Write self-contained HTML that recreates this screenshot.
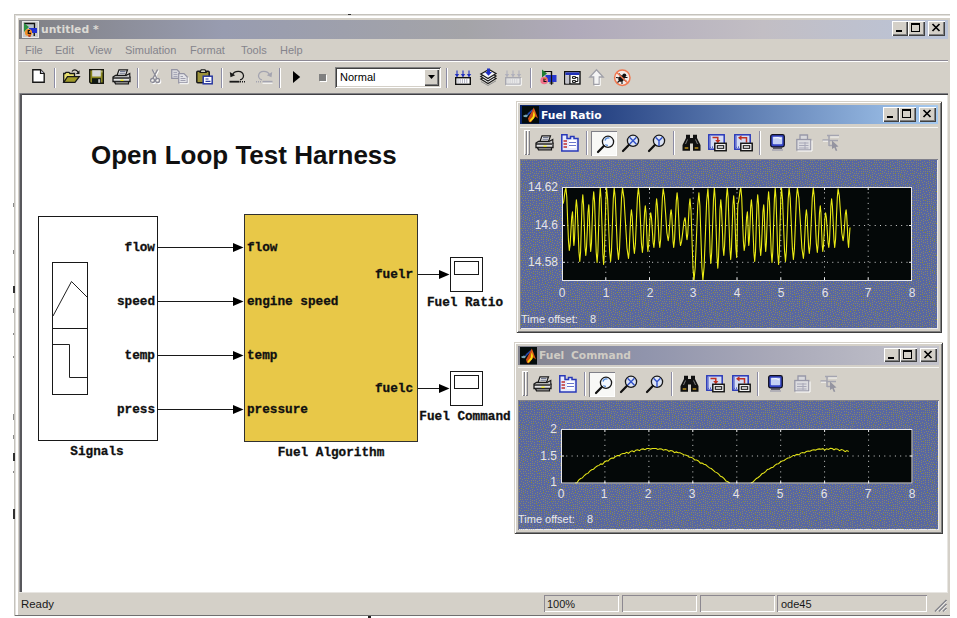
<!DOCTYPE html>
<html><head><meta charset="utf-8"><title>untitled *</title>
<style>
html,body{margin:0;padding:0;background:#fff;}
body{width:957px;height:618px;position:relative;overflow:hidden;font-family:"Liberation Sans",sans-serif;}
svg{overflow:visible;display:block}
</style></head><body>
<div style="position:absolute;left:14px;top:14px;width:936px;height:602px;background:#d4d0c8;box-shadow:inset 1px 1px 0 #c4c2bc,inset 0 -1px 0 #707070,inset 2px 2px 0 #e2e0dc,inset 4px 4px 0 #fff;"></div>
<div style="position:absolute;left:19px;top:19.5px;width:929px;height:19px;background:linear-gradient(90deg,#808084 0%,#989cb0 22%,#a4a4a8 48%,#b0aaba 60%,#c2bec4 80%,#bac4d8 100%);"></div>
<svg style="position:absolute;left:21.5px;top:20.5px" width="17" height="17" viewBox="0 0 17 17">
<rect x="0.5" y="0.5" width="16" height="16" fill="#c8c8c8" stroke="#e8e8e8"/>
<rect x="3" y="3" width="9" height="9" fill="#b8c0c8"/>
<path d="M2 2.5H12.5V12" fill="none" stroke="#101010" stroke-width="1.3"/>
<path d="M2 2L7 6L2 11Z" fill="#2c9040"/>
<rect x="7" y="7" width="8" height="5" fill="#2030d0"/>
<circle cx="6.5" cy="11.5" r="3.6" fill="#f09028"/>
<path d="M8 9.5H6.3V12.3H9" fill="none" stroke="#101010" stroke-width="1.2"/>
<path d="M6 14L9 13L8.5 16H6.5Z" fill="#c04820"/>
<rect x="11.5" y="12" width="1.5" height="3" fill="#202020"/>
</svg>
<svg style="position:absolute;left:41px;top:33.2px" width="1" height="1"><text x="0" y="0" text-anchor="start" xml:space="preserve" style="font:bold 10.8px 'DejaVu Sans','Liberation Sans',sans-serif;fill:#dcdad4;white-space:pre;">untitled *</text></svg>
<div style="position:absolute;left:891.5px;top:21px;width:16.5px;height:15px;background:#d4d0c8;box-shadow:inset 1px 1px 0 #fff,inset -1px -1px 0 #404040,inset -2px -2px 0 #808080;"></div>
<div style="position:absolute;left:895.5px;top:30px;width:6px;height:2px;background:#000"></div>
<div style="position:absolute;left:908px;top:21px;width:16.5px;height:15px;background:#d4d0c8;box-shadow:inset 1px 1px 0 #fff,inset -1px -1px 0 #404040,inset -2px -2px 0 #808080;"></div>
<div style="position:absolute;left:911px;top:23px;width:9px;height:9px;border:1px solid #000;border-top:2px solid #000;box-sizing:border-box"></div>
<div style="position:absolute;left:928px;top:21px;width:17px;height:15px;background:#d4d0c8;box-shadow:inset 1px 1px 0 #fff,inset -1px -1px 0 #404040,inset -2px -2px 0 #808080;"></div>
<svg style="position:absolute;left:932px;top:24px" width="8" height="7" viewBox="0 0 8 7"><path d="M0.5 0L7.5 7M7.5 0L0.5 7" stroke="#000" stroke-width="1.7" fill="none"/></svg>
<svg style="position:absolute;left:25px;top:54px" width="1" height="1"><text x="0" y="0" text-anchor="start" xml:space="preserve" style="font:11px 'Liberation Sans',sans-serif;fill:#84848c;white-space:pre;">File</text></svg>
<svg style="position:absolute;left:55px;top:54px" width="1" height="1"><text x="0" y="0" text-anchor="start" xml:space="preserve" style="font:11px 'Liberation Sans',sans-serif;fill:#84848c;white-space:pre;">Edit</text></svg>
<svg style="position:absolute;left:88.3px;top:54px" width="1" height="1"><text x="0" y="0" text-anchor="start" xml:space="preserve" style="font:11px 'Liberation Sans',sans-serif;fill:#84848c;white-space:pre;">View</text></svg>
<svg style="position:absolute;left:125px;top:54px" width="1" height="1"><text x="0" y="0" text-anchor="start" xml:space="preserve" style="font:11px 'Liberation Sans',sans-serif;fill:#84848c;white-space:pre;">Simulation</text></svg>
<svg style="position:absolute;left:190px;top:54px" width="1" height="1"><text x="0" y="0" text-anchor="start" xml:space="preserve" style="font:11px 'Liberation Sans',sans-serif;fill:#84848c;white-space:pre;">Format</text></svg>
<svg style="position:absolute;left:241.3px;top:54px" width="1" height="1"><text x="0" y="0" text-anchor="start" xml:space="preserve" style="font:11px 'Liberation Sans',sans-serif;fill:#84848c;white-space:pre;">Tools</text></svg>
<svg style="position:absolute;left:280px;top:54px" width="1" height="1"><text x="0" y="0" text-anchor="start" xml:space="preserve" style="font:11px 'Liberation Sans',sans-serif;fill:#84848c;white-space:pre;">Help</text></svg>
<div style="position:absolute;left:19px;top:60px;width:929px;height:1px;background:#8c8894"></div>
<div style="position:absolute;left:19px;top:61px;width:929px;height:1px;background:#fff"></div>
<div style="position:absolute;left:54px;top:68px;width:1px;height:20px;background:#8c8ca4"></div>
<div style="position:absolute;left:55px;top:68px;width:1px;height:20px;background:#fff"></div>
<div style="position:absolute;left:137px;top:68px;width:1px;height:20px;background:#8c8ca4"></div>
<div style="position:absolute;left:138px;top:68px;width:1px;height:20px;background:#fff"></div>
<div style="position:absolute;left:221px;top:68px;width:1px;height:20px;background:#8c8ca4"></div>
<div style="position:absolute;left:222px;top:68px;width:1px;height:20px;background:#fff"></div>
<div style="position:absolute;left:279px;top:68px;width:1px;height:20px;background:#8c8ca4"></div>
<div style="position:absolute;left:280px;top:68px;width:1px;height:20px;background:#fff"></div>
<div style="position:absolute;left:446px;top:68px;width:1px;height:20px;background:#8c8ca4"></div>
<div style="position:absolute;left:447px;top:68px;width:1px;height:20px;background:#fff"></div>
<div style="position:absolute;left:530px;top:68px;width:1px;height:20px;background:#8c8ca4"></div>
<div style="position:absolute;left:531px;top:68px;width:1px;height:20px;background:#fff"></div>
<svg style="position:absolute;left:32px;top:69px" width="13" height="14" viewBox="0 0 13 14"><path d="M0.8 0.8H8.5L12.2 4.5V13.2H0.8Z" fill="#fff" stroke="#181818" stroke-width="1.4"/><path d="M8.5 0.8V4.5H12.2" fill="#c8c8d8" stroke="#181818" stroke-width="1.2"/></svg>
<svg style="position:absolute;left:63px;top:68px" width="17" height="16" viewBox="0 0 17 16"><path d="M9 3.5C10.5 1.2 13.5 1.2 15 4" fill="none" stroke="#181818" stroke-width="1.2"/><path d="M16.5 2.2V6H12.8Z" fill="#181818"/><path d="M0.7 14.3V5.5H2L3 4.3H6L7 5.5H11.5V8.5" fill="#e8e070" stroke="#181818" stroke-width="1.3"/><path d="M0.7 14.3L4.5 8.7H16.3L12 14.3Z" fill="#a09a28" stroke="#181818" stroke-width="1.3"/></svg>
<svg style="position:absolute;left:89px;top:69px" width="15" height="15" viewBox="0 0 15 15"><path d="M0.7 0.7H14.3V14.3H2L0.7 13Z" fill="#8c8820" stroke="#181810" stroke-width="1.4"/><rect x="3.2" y="1.2" width="8.6" height="6.3" fill="#d8d8d8"/><rect x="3" y="9.2" width="9" height="5" fill="#101814"/><rect x="9.2" y="10.2" width="2" height="3.6" fill="#c0c0c0"/><rect x="12.4" y="1.5" width="1" height="2" fill="#d8d8a0"/></svg>
<svg style="position:absolute;left:112px;top:69px" width="19" height="16" viewBox="0 0 19 16"><path d="M5 6.5L7 0.8H15.5L13.5 6.5Z" fill="#e8e8e8" stroke="#181818" stroke-width="1.2"/><path d="M8 2.5H13.5M7.5 4.2H13" stroke="#707890" stroke-width="1.1"/><path d="M1 8L3.5 6.5H16L18 8V12.5H1Z" fill="#e4e4e4" stroke="#181818" stroke-width="1.3"/><path d="M14 6.5L17.8 4.5V9" fill="#c8c8c8" stroke="#181818" stroke-width="1.1"/><rect x="1" y="8.3" width="16" height="1.4" fill="#181818"/><rect x="8.5" y="10.6" width="3" height="1.3" fill="#f0e810"/><path d="M2.5 12.8H16.5V14.8H3.5Z" fill="#f4f4f4" stroke="#181818" stroke-width="1.2"/></svg>
<svg style="position:absolute;left:150px;top:69px" width="12" height="16" viewBox="0 0 12 16"><g transform="translate(1,1)"><path d="M2.2 0.5L7.2 10M7.6 0.5L2.6 10" stroke="#fff" stroke-width="1.4" fill="none"/><circle cx="2.6" cy="11.5" r="2" fill="none" stroke="#fff" stroke-width="1.3"/><circle cx="7.6" cy="11.5" r="2" fill="none" stroke="#fff" stroke-width="1.3"/></g><path d="M2.2 0.5L7.2 10M7.6 0.5L2.6 10" stroke="#8c8c98" stroke-width="1.4" fill="none"/><circle cx="2.6" cy="11.5" r="2" fill="none" stroke="#8c8c98" stroke-width="1.3"/><circle cx="7.6" cy="11.5" r="2" fill="none" stroke="#8c8c98" stroke-width="1.3"/></svg>
<svg style="position:absolute;left:171px;top:69px" width="18" height="15" viewBox="0 0 18 15"><path d="M0.7 0.7H6L8.3 3V9.3H0.7Z" fill="#d8d8dc" stroke="#9494a4" stroke-width="1.2"/><path d="M2.5 3.5H6M2.5 5.5H6.5M2.5 7.5H6.5" stroke="#a8a8b8" stroke-width="1"/><path d="M7.7 4.7H13L16.3 8V13.8H7.7Z" fill="#e4e4e8" stroke="#9494a4" stroke-width="1.2"/><path d="M9.5 7.5H12M9.5 9.5H14.5M9.5 11.5H14.5" stroke="#a0a0b0" stroke-width="1"/><path d="M8.5 14.7H17.2V8.5" stroke="#fff" stroke-width="1" fill="none"/></svg>
<svg style="position:absolute;left:196px;top:69px" width="17" height="16" viewBox="0 0 17 16"><rect x="0.8" y="2.3" width="12.4" height="11.4" rx="1" fill="#9c9238" stroke="#181818" stroke-width="1.5"/><path d="M4 3.5L5.2 0.8H9L10.2 3.5Z" fill="#d0d0c0" stroke="#181818" stroke-width="1.1"/><rect x="7.2" y="7.2" width="9" height="7.6" fill="#fff" stroke="#2838a0" stroke-width="1.5"/><path d="M9.5 10H12.5M9.5 12.3H14.5" stroke="#2838a0" stroke-width="1.2"/></svg>
<svg style="position:absolute;left:229px;top:69px" width="18" height="15" viewBox="0 0 18 15"><path d="M3.5 6C5 1.5 13.5 0.5 14.5 6.5C14.7 9 12.5 10.5 11 10.8" fill="none" stroke="#181818" stroke-width="1.3"/><path d="M0.8 3L1.5 8.2L6.2 6.2Z" fill="#181818"/><rect x="0.5" y="11.8" width="10" height="1.8" fill="#181818"/><path d="M11 12.7H17" stroke="#181818" stroke-width="1.6" stroke-dasharray="1 1"/></svg>
<svg style="position:absolute;left:255px;top:69px" width="18" height="15" viewBox="0 0 18 15"><path d="M14.5 6C13 1.5 4.5 0.5 3.5 6.5C3.3 9 5.5 10.5 7 10.8" fill="none" stroke="#a4a4b0" stroke-width="1.3"/><path d="M17.2 3L16.5 8.2L11.8 6.2Z" fill="#a4a4b0"/><rect x="7.5" y="11.8" width="10" height="1.8" fill="#a4a4b0"/><path d="M1 12.7H7" stroke="#a4a4b0" stroke-width="1.6" stroke-dasharray="1 1"/><path d="M7.5 14.2H17.5" stroke="#fff" stroke-width="1"/></svg>
<svg style="position:absolute;left:293px;top:71px" width="8" height="12" viewBox="0 0 8 12"><path d="M0 0L7.2 6L0 12Z" fill="#000"/></svg>
<div style="position:absolute;left:319px;top:74px;width:7px;height:7px;background:#808080;box-shadow:1px 1px 0 #fff"></div>
<div style="position:absolute;left:335px;top:67px;width:106px;height:21px;background:#fff;box-shadow:inset 1px 1px 0 #808080,inset -1px -1px 0 #fff,inset 2px 2px 0 #404040,inset -2px -2px 0 #d4d0c8;"></div>
<svg style="position:absolute;left:340px;top:81.4px" width="1" height="1"><text x="0" y="0" text-anchor="start" xml:space="preserve" style="font:11px 'Liberation Sans',sans-serif;fill:#000;white-space:pre;">Normal</text></svg>
<div style="position:absolute;left:424px;top:69px;width:15px;height:17px;background:#d4d0c8;box-shadow:inset 1px 1px 0 #fff,inset -1px -1px 0 #404040,inset -2px -2px 0 #808080;"></div>
<svg style="position:absolute;left:428px;top:75px" width="7" height="4" viewBox="0 0 7 4"><path d="M0 0H7L3.5 4Z" fill="#000"/></svg>
<svg style="position:absolute;left:455px;top:70px" width="17" height="16" viewBox="0 0 17 16"><rect x="0.7" y="7.7" width="14.6" height="6.6" fill="#fff" stroke="#101010" stroke-width="1.4"/><path d="M2.5 10H13.5M2.5 12H13.5" stroke="#606080" stroke-width="1" stroke-dasharray="1 1.2"/><path d="M2 0.5V6.5" stroke="#2030c0" stroke-width="1.1"/><path d="M-0.20000000000000018 4L2 7.2L4.2 4Z" fill="#2030c0"/><path d="M8 0.5V6.5" stroke="#2030c0" stroke-width="1.1"/><path d="M5.8 4L8 7.2L10.2 4Z" fill="#2030c0"/><path d="M14 0.5V6.5" stroke="#2030c0" stroke-width="1.1"/><path d="M11.8 4L14 7.2L16.2 4Z" fill="#2030c0"/></svg>
<svg style="position:absolute;left:480px;top:68px" width="17" height="18" viewBox="0 0 17 18"><path d="M0.8 11L8 15.5L16 10.5L9 6.5Z" fill="#fff" stroke="#181818" stroke-width="1.2"/><path d="M0.8 8.5L8 13L16 8L9 4Z" fill="#fff" stroke="#181818" stroke-width="1.2"/><path d="M0.8 6L8 10.5L16 5.5L9 1.5Z" fill="#f4f4f8" stroke="#181818" stroke-width="1.2"/><path d="M7 0.5H10V4H12L8.5 7.8L5 4H7Z" fill="#2030c0"/><path d="M1 13.5L8 17.5L16 12.8" fill="none" stroke="#909090" stroke-width="1"/></svg>
<svg style="position:absolute;left:505px;top:70px" width="17" height="16" viewBox="0 0 17 16"><rect x="0.7" y="7.7" width="14.6" height="6.6" fill="#e8e8e8" stroke="#a8a8b0" stroke-width="1.4"/><path d="M2.5 10H13.5M2.5 12H13.5" stroke="#c0c0c8" stroke-width="1" stroke-dasharray="1 1.2"/><path d="M2 0.5V6.5" stroke="#b0b0bc" stroke-width="1.1"/><path d="M-0.20000000000000018 4L2 7.2L4.2 4Z" fill="#b0b0bc"/><path d="M8 0.5V6.5" stroke="#b0b0bc" stroke-width="1.1"/><path d="M5.8 4L8 7.2L10.2 4Z" fill="#b0b0bc"/><path d="M14 0.5V6.5" stroke="#b0b0bc" stroke-width="1.1"/><path d="M11.8 4L14 7.2L16.2 4Z" fill="#b0b0bc"/><path d="M1 15.2H16.2V8" stroke="#fff" stroke-width="1" fill="none"/></svg>
<svg style="position:absolute;left:540px;top:69px" width="17" height="17" viewBox="0 0 17 17"><path d="M3 2.5H11.5V15.5M9.5 14H13.5" fill="none" stroke="#101010" stroke-width="1.2"/><path d="M2 0.5L7 4.5L2 8.5Z" fill="#207c34"/><rect x="5.5" y="6" width="11" height="7" fill="#2838d0"/><path d="M11.5 2.5V15.5" stroke="#101010" stroke-width="1.2"/><circle cx="4.2" cy="11.5" r="3.8" fill="#f07088"/><path d="M6 10H4V12.5H6.5" fill="none" stroke="#101010" stroke-width="1.1"/><path d="M4 10L7 9" stroke="#e08020" stroke-width="1.2"/></svg>
<svg style="position:absolute;left:564px;top:71px" width="17" height="14" viewBox="0 0 17 14"><rect x="0.7" y="0.7" width="15.3" height="12.3" fill="#fcfcfc" stroke="#101010" stroke-width="1.4"/><rect x="1.4" y="1.4" width="14" height="2.6" fill="#2030b8"/><rect x="5.2" y="4" width="1.3" height="9" fill="#101010"/><rect x="1.5" y="4.2" width="3.6" height="8.4" fill="#c4c4cc"/><path d="M8.5 5.6H11.5V7.4H8.5ZM8.5 9.6H11.5V11.4H8.5Z" fill="#fff" stroke="#101010" stroke-width="1"/><path d="M11.5 6.5H13.8V10.5H11.5" fill="none" stroke="#101010" stroke-width="1"/></svg>
<svg style="position:absolute;left:589px;top:69px" width="15" height="17" viewBox="0 0 15 17"><path d="M7.5 0.8L14.2 8H10.3V15.5H4.7V8H0.8Z" fill="#f4f4f4" stroke="#a0a0a8" stroke-width="1.3"/><path d="M5.5 16.5H11.2V8.8" stroke="#fff" stroke-width="1" fill="none"/></svg>
<svg style="position:absolute;left:613px;top:69px" width="19" height="18" viewBox="0 0 19 18"><circle cx="9.3" cy="8.7" r="7.7" fill="#f4ece8" stroke="#f07850" stroke-width="1.5"/><ellipse cx="8.5" cy="9.5" rx="2.8" ry="3.4" fill="#101010" transform="rotate(35 8.5 9.5)"/><circle cx="11.3" cy="6.3" r="1.9" fill="#101010"/><path d="M3 8.5L7 9M4.5 13.5L7.5 11M9 15V12M13.5 12.5L10.5 10.5M14.5 8.5L11 8.5M6 4.5L8 7" stroke="#101010" stroke-width="1.1"/><path d="M3.8 3.5L14.8 14" stroke="#f07850" stroke-width="1.5"/></svg>
<div style="position:absolute;left:19px;top:93px;width:929px;height:1px;background:#808084"></div>
<div style="position:absolute;left:20px;top:94px;width:928px;height:1px;background:#404044"></div>
<div style="position:absolute;left:19px;top:93px;width:1px;height:499px;background:#9a9a9e"></div>
<div style="position:absolute;left:20px;top:94px;width:1.8px;height:498px;background:#58585c"></div>
<div style="position:absolute;left:22px;top:95px;width:925px;height:497px;background:#fff"></div>
<div style="position:absolute;left:19px;top:592px;width:929px;height:1px;background:#e8e6e2"></div>
<div style="position:absolute;left:947px;top:95px;width:1px;height:497px;background:#e8e6e2"></div>
<div style="position:absolute;left:13px;top:203px;width:1px;height:4px;background:#8a8a8a"></div>
<div style="position:absolute;left:13px;top:250px;width:1px;height:4px;background:#8a8a8a"></div>
<div style="position:absolute;left:13px;top:286px;width:1.5px;height:7px;background:#303030"></div>
<div style="position:absolute;left:13px;top:308px;width:1px;height:5px;background:#8a8a8a"></div>
<div style="position:absolute;left:13px;top:333px;width:1px;height:2px;background:#8a8a8a"></div>
<div style="position:absolute;left:13px;top:356px;width:1px;height:2px;background:#8a8a8a"></div>
<div style="position:absolute;left:13px;top:414px;width:1px;height:6px;background:#8a8a8a"></div>
<div style="position:absolute;left:13px;top:435px;width:1px;height:4px;background:#8a8a8a"></div>
<div style="position:absolute;left:13px;top:453px;width:1.5px;height:8px;background:#303030"></div>
<div style="position:absolute;left:13px;top:471px;width:1px;height:2px;background:#8a8a8a"></div>
<div style="position:absolute;left:13px;top:509px;width:1.5px;height:10px;background:#303030"></div>
<div style="position:absolute;left:347.5px;top:14px;width:3px;height:1px;background:#303030"></div>
<div style="position:absolute;left:368px;top:616.3px;width:2.5px;height:1.7px;background:#202020"></div>
<svg style="position:absolute;left:21px;top:607.8px" width="1" height="1"><text x="0" y="0" text-anchor="start" xml:space="preserve" style="font:11.4px 'Liberation Sans',sans-serif;fill:#181818;white-space:pre;">Ready</text></svg>
<div style="position:absolute;left:544px;top:595px;width:75px;height:17px;box-shadow:inset 1px 1px 0 #8c8890,inset -1px -1px 0 #fff;"></div>
<div style="position:absolute;left:622px;top:595px;width:75px;height:17px;box-shadow:inset 1px 1px 0 #8c8890,inset -1px -1px 0 #fff;"></div>
<div style="position:absolute;left:700px;top:595px;width:75px;height:17px;box-shadow:inset 1px 1px 0 #8c8890,inset -1px -1px 0 #fff;"></div>
<div style="position:absolute;left:777px;top:595px;width:150px;height:17px;box-shadow:inset 1px 1px 0 #8c8890,inset -1px -1px 0 #fff;"></div>
<svg style="position:absolute;left:547px;top:607.8px" width="1" height="1"><text x="0" y="0" text-anchor="start" xml:space="preserve" style="font:11px 'Liberation Sans',sans-serif;fill:#181818;white-space:pre;">100%</text></svg>
<svg style="position:absolute;left:781px;top:607.8px" width="1" height="1"><text x="0" y="0" text-anchor="start" xml:space="preserve" style="font:11px 'Liberation Sans',sans-serif;fill:#181818;white-space:pre;">ode45</text></svg>
<svg style="position:absolute;left:934px;top:599px" width="13" height="13" viewBox="0 0 13 13"><path d="M12.5 1L1 12.5M12.5 5L5 12.5M12.5 9L9 12.5" stroke="#808088" stroke-width="1.6"/><path d="M12.5 2.3L2.3 12.5M12.5 6.3L6.3 12.5M12.5 10.3L10.3 12.5" stroke="#fff" stroke-width="0.8"/></svg>
<svg style="position:absolute;left:90.5px;top:164.2px" width="1" height="1"><text x="0" y="0" text-anchor="start" xml:space="preserve" style="font:bold 26px 'Liberation Sans',sans-serif;fill:#101010;white-space:pre;">Open Loop Test Harness</text></svg>
<div style="position:absolute;left:38px;top:216px;width:120px;height:225px;border:1px solid #181818;box-sizing:border-box;background:#fff"></div>
<div style="position:absolute;left:52px;top:262px;width:36px;height:133px;border:1px solid #181818;box-sizing:border-box"></div>
<div style="position:absolute;left:52px;top:328px;width:36px;height:1px;background:#181818"></div>
<svg style="position:absolute;left:52px;top:262px" width="36" height="133" viewBox="0 0 36 133"><path d="M1 54L19.5 19.5L35 35" fill="none" stroke="#202020" stroke-width="1"/><path d="M1 82.5H17.5V115.5H35" fill="none" stroke="#202020" stroke-width="1"/></svg>
<svg style="position:absolute;left:154.5px;top:250.7px" width="1" height="1"><text x="0" y="0" text-anchor="end" xml:space="preserve" style="font:bold 12.7px 'Liberation Mono',monospace;fill:#101010;white-space:pre;stroke:#101010;stroke-width:0.3px;">flow</text></svg>
<div style="position:absolute;left:158px;top:247px;width:77px;height:1px;background:#181818"></div>
<svg style="position:absolute;left:233px;top:243px" width="11" height="9" viewBox="0 0 11 9"><path d="M0 0L10.5 4.5L0 9Z" fill="#000"/></svg>
<svg style="position:absolute;left:154.5px;top:304.7px" width="1" height="1"><text x="0" y="0" text-anchor="end" xml:space="preserve" style="font:bold 12.7px 'Liberation Mono',monospace;fill:#101010;white-space:pre;stroke:#101010;stroke-width:0.3px;">speed</text></svg>
<div style="position:absolute;left:158px;top:301px;width:77px;height:1px;background:#181818"></div>
<svg style="position:absolute;left:233px;top:297px" width="11" height="9" viewBox="0 0 11 9"><path d="M0 0L10.5 4.5L0 9Z" fill="#000"/></svg>
<svg style="position:absolute;left:154.5px;top:358.7px" width="1" height="1"><text x="0" y="0" text-anchor="end" xml:space="preserve" style="font:bold 12.7px 'Liberation Mono',monospace;fill:#101010;white-space:pre;stroke:#101010;stroke-width:0.3px;">temp</text></svg>
<div style="position:absolute;left:158px;top:355px;width:77px;height:1px;background:#181818"></div>
<svg style="position:absolute;left:233px;top:351px" width="11" height="9" viewBox="0 0 11 9"><path d="M0 0L10.5 4.5L0 9Z" fill="#000"/></svg>
<svg style="position:absolute;left:154.5px;top:412.7px" width="1" height="1"><text x="0" y="0" text-anchor="end" xml:space="preserve" style="font:bold 12.7px 'Liberation Mono',monospace;fill:#101010;white-space:pre;stroke:#101010;stroke-width:0.3px;">press</text></svg>
<div style="position:absolute;left:158px;top:409px;width:77px;height:1px;background:#181818"></div>
<svg style="position:absolute;left:233px;top:405px" width="11" height="9" viewBox="0 0 11 9"><path d="M0 0L10.5 4.5L0 9Z" fill="#000"/></svg>
<svg style="position:absolute;left:97px;top:455.3px" width="1" height="1"><text x="0" y="0" text-anchor="middle" xml:space="preserve" style="font:bold 12.7px 'Liberation Mono',monospace;fill:#101010;white-space:pre;stroke:#101010;stroke-width:0.3px;">Signals</text></svg>
<div style="position:absolute;left:244px;top:214px;width:174px;height:228px;border:1px solid #303030;box-sizing:border-box;background:#e8c848"></div>
<svg style="position:absolute;left:246.6px;top:250.7px" width="1" height="1"><text x="0" y="0" text-anchor="start" xml:space="preserve" style="font:bold 12.7px 'Liberation Mono',monospace;fill:#101010;white-space:pre;stroke:#101010;stroke-width:0.3px;">flow</text></svg>
<svg style="position:absolute;left:246.6px;top:304.7px" width="1" height="1"><text x="0" y="0" text-anchor="start" xml:space="preserve" style="font:bold 12.7px 'Liberation Mono',monospace;fill:#101010;white-space:pre;stroke:#101010;stroke-width:0.3px;">engine speed</text></svg>
<svg style="position:absolute;left:246.6px;top:358.7px" width="1" height="1"><text x="0" y="0" text-anchor="start" xml:space="preserve" style="font:bold 12.7px 'Liberation Mono',monospace;fill:#101010;white-space:pre;stroke:#101010;stroke-width:0.3px;">temp</text></svg>
<svg style="position:absolute;left:246.6px;top:412.7px" width="1" height="1"><text x="0" y="0" text-anchor="start" xml:space="preserve" style="font:bold 12.7px 'Liberation Mono',monospace;fill:#101010;white-space:pre;stroke:#101010;stroke-width:0.3px;">pressure</text></svg>
<svg style="position:absolute;left:330.5px;top:456px" width="1" height="1"><text x="0" y="0" text-anchor="middle" xml:space="preserve" style="font:bold 12.7px 'Liberation Mono',monospace;fill:#101010;white-space:pre;stroke:#101010;stroke-width:0.3px;">Fuel Algorithm</text></svg>
<svg style="position:absolute;left:413.3px;top:277.7px" width="1" height="1"><text x="0" y="0" text-anchor="end" xml:space="preserve" style="font:bold 12.7px 'Liberation Mono',monospace;fill:#101010;white-space:pre;stroke:#101010;stroke-width:0.3px;">fuelr</text></svg>
<div style="position:absolute;left:418px;top:274px;width:23px;height:1px;background:#181818"></div>
<svg style="position:absolute;left:439px;top:270px" width="11" height="9" viewBox="0 0 11 9"><path d="M0 0L10.5 4.5L0 9Z" fill="#000"/></svg>
<div style="position:absolute;left:450px;top:257px;width:33px;height:35px;border:1px solid #181818;box-sizing:border-box;background:#fff"></div>
<div style="position:absolute;left:454px;top:261px;width:25px;height:14px;border:1px solid #181818;box-sizing:border-box;background:#fff"></div>
<svg style="position:absolute;left:465.3px;top:305.8px" width="1" height="1"><text x="0" y="0" text-anchor="middle" xml:space="preserve" style="font:bold 12.7px 'Liberation Mono',monospace;fill:#101010;white-space:pre;stroke:#101010;stroke-width:0.3px;">Fuel Ratio</text></svg>
<svg style="position:absolute;left:413.3px;top:391.7px" width="1" height="1"><text x="0" y="0" text-anchor="end" xml:space="preserve" style="font:bold 12.7px 'Liberation Mono',monospace;fill:#101010;white-space:pre;stroke:#101010;stroke-width:0.3px;">fuelc</text></svg>
<div style="position:absolute;left:418px;top:388px;width:23px;height:1px;background:#181818"></div>
<svg style="position:absolute;left:439px;top:384px" width="11" height="9" viewBox="0 0 11 9"><path d="M0 0L10.5 4.5L0 9Z" fill="#000"/></svg>
<div style="position:absolute;left:450px;top:371px;width:33px;height:35px;border:1px solid #181818;box-sizing:border-box;background:#fff"></div>
<div style="position:absolute;left:454px;top:375px;width:25px;height:14px;border:1px solid #181818;box-sizing:border-box;background:#fff"></div>
<svg style="position:absolute;left:465.3px;top:419.5px" width="1" height="1"><text x="0" y="0" text-anchor="middle" xml:space="preserve" style="font:bold 12.7px 'Liberation Mono',monospace;fill:#101010;white-space:pre;stroke:#101010;stroke-width:0.3px;">Fuel Command</text></svg>
<div style="position:absolute;left:516px;top:101px;width:426px;height:232px;background:#d4d0c8;box-shadow:inset 1px 1px 0 #d4d0c8,inset -1px -1px 0 #404040,inset 2px 2px 0 #fff,inset -2px -2px 0 #808080;"></div>
<div style="position:absolute;left:520px;top:105px;width:418px;height:19px;background:linear-gradient(90deg,#0a246a 0%,#5877ad 50%,#a6caf0 100%)"></div>
<svg style="position:absolute;left:521.8px;top:106px" width="17" height="17.5" viewBox="0 0 17 17.5"><rect width="17" height="17.5" fill="#040c0c"/><path d="M1 9.7L4 8.4L6.2 9.4L4.6 11.2L2 10.9Z" fill="#78a4b8"/><path d="M10.6 3L6.6 6.6L4.8 8.6L6.4 9.2L10.9 4.6Z" fill="#2848a8"/><path d="M11.8 1.5L13.6 6L16 12.4L13.3 10.6L12 12.3L9 16.2L7 16L6 12.6L9 7Z" fill="#d05018"/><path d="M11.8 2.5L12.8 6L11 8L12 5Z" fill="#f08828"/><path d="M12 5.8L13 9L12.2 12L10 14.2L8.2 15.8L7.4 14.8L10.8 10.6L11.2 7Z" fill="#f8e010"/></svg>
<svg style="position:absolute;left:541px;top:118.7px" width="1" height="1"><text x="0" y="0" text-anchor="start" xml:space="preserve" style="font:bold 10.7px 'DejaVu Sans','Liberation Sans',sans-serif;fill:#fff;white-space:pre;">Fuel Ratio</text></svg>
<div style="position:absolute;left:882.5px;top:107px;width:16.5px;height:14.5px;background:#d4d0c8;box-shadow:inset 1px 1px 0 #fff,inset -1px -1px 0 #404040,inset -2px -2px 0 #808080;"></div>
<div style="position:absolute;left:886.5px;top:116px;width:6px;height:2px;background:#000"></div>
<div style="position:absolute;left:899px;top:107px;width:16.5px;height:14.5px;background:#d4d0c8;box-shadow:inset 1px 1px 0 #fff,inset -1px -1px 0 #404040,inset -2px -2px 0 #808080;"></div>
<div style="position:absolute;left:902px;top:109px;width:9px;height:9px;border:1px solid #000;border-top:2px solid #000;box-sizing:border-box"></div>
<div style="position:absolute;left:918.5px;top:107px;width:17px;height:14.5px;background:#d4d0c8;box-shadow:inset 1px 1px 0 #fff,inset -1px -1px 0 #404040,inset -2px -2px 0 #808080;"></div>
<svg style="position:absolute;left:922.5px;top:110px" width="8" height="7" viewBox="0 0 8 7"><path d="M0.5 0L7.5 7M7.5 0L0.5 7" stroke="#000" stroke-width="1.7" fill="none"/></svg>
<div style="position:absolute;left:520px;top:126.5px;width:418px;height:1px;background:#f4f4f0"></div>
<div style="position:absolute;left:524px;top:130px;width:3px;height:25px;background:#d4d0c8;box-shadow:inset 1px 1px 0 #fff,inset -1px -1px 0 #808088;"></div>
<div style="position:absolute;left:527px;top:130px;width:3px;height:25px;background:#d4d0c8;box-shadow:inset 1px 1px 0 #fff,inset -1px -1px 0 #808088;"></div>
<svg style="position:absolute;left:535px;top:135px" width="19" height="16" viewBox="0 0 19 16"><path d="M5 6.5L7 0.8H15.5L13.5 6.5Z" fill="#e8e8e8" stroke="#181818" stroke-width="1.2"/><path d="M8 2.5H13.5M7.5 4.2H13" stroke="#707890" stroke-width="1.1"/><path d="M1 8L3.5 6.5H16L18 8V12.5H1Z" fill="#e4e4e4" stroke="#181818" stroke-width="1.3"/><path d="M14 6.5L17.8 4.5V9" fill="#c8c8c8" stroke="#181818" stroke-width="1.1"/><rect x="1" y="8.3" width="16" height="1.4" fill="#181818"/><rect x="8.5" y="10.6" width="3" height="1.3" fill="#f0e810"/><path d="M2.5 12.8H16.5V14.8H3.5Z" fill="#f4f4f4" stroke="#181818" stroke-width="1.2"/></svg>
<svg style="position:absolute;left:561px;top:134px" width="18" height="18" viewBox="0 0 18 18"><path d="M0.8 17H17V4.5H13V2.5H9.5V4.5H6V0.8H0.8Z" fill="#e8ecfc" stroke="#2838b8" stroke-width="1.5"/><path d="M2.5 7H6M2.5 10H6M2.5 13H6" stroke="#c03030" stroke-width="1.5"/><path d="M8 7H15M8 10H15M8 13H15" stroke="#fff" stroke-width="1.8"/><path d="M8 8.5H15M8 11.5H15" stroke="#4858c0" stroke-width="0.8"/></svg>
<div style="position:absolute;left:586px;top:131px;width:1px;height:24px;background:#8c8ca4"></div>
<div style="position:absolute;left:587px;top:131px;width:1px;height:24px;background:#fff"></div>
<div style="position:absolute;left:591px;top:131px;width:26px;height:25px;background:#f8f8f6;box-shadow:inset 1px 1px 0 #808088,inset -1px -1px 0 #fff;"></div>
<svg style="position:absolute;left:597px;top:135px" width="18" height="18" viewBox="0 0 18 18"><circle cx="11" cy="6.8" r="5.6" fill="#f4f8ff" stroke="#181818" stroke-width="1.3"/><path d="M8 5.5A3.6 3.6 0 0 1 12.5 3.2" stroke="#5088d8" stroke-width="1.3" fill="none"/><path d="M8.5 9.3A3.6 3.6 0 0 0 11 10.4" stroke="#5088d8" stroke-width="1.1" fill="none"/><path d="M6.8 11L1 17" stroke="#101010" stroke-width="2.2" stroke-linecap="round"/></svg>
<svg style="position:absolute;left:622px;top:134px" width="18" height="18" viewBox="0 0 18 18"><circle cx="11" cy="6.8" r="5.6" fill="#dce4f4" stroke="#181818" stroke-width="1.3"/><path d="M7.5 3.3L14.5 10.3M14.5 3.3L7.5 10.3" stroke="#3050c8" stroke-width="1.4"/><path d="M6.8 11L1 17" stroke="#101010" stroke-width="2.2" stroke-linecap="round"/></svg>
<svg style="position:absolute;left:648px;top:134px" width="18" height="18" viewBox="0 0 18 18"><circle cx="11" cy="6.8" r="5.6" fill="#dce4f4" stroke="#181818" stroke-width="1.3"/><path d="M7.5 3.3L11 6.8L14.5 3.3M11 6.8V12" stroke="#3050c8" stroke-width="1.4" fill="none"/><path d="M6.8 11L1 17" stroke="#101010" stroke-width="2.2" stroke-linecap="round"/></svg>
<div style="position:absolute;left:673px;top:131px;width:1px;height:24px;background:#8c8ca4"></div>
<div style="position:absolute;left:674px;top:131px;width:1px;height:24px;background:#fff"></div>
<svg style="position:absolute;left:682px;top:134px" width="19" height="18" viewBox="0 0 19 18"><path d="M4 0.8H8V4H11V0.8H15V4L18.5 11V16.8H11V9.5H8V16.8H0.5V11L4 4Z" fill="#101010"/><rect x="2.7" y="13" width="3.6" height="2" fill="#907018"/><rect x="12.7" y="13" width="3.6" height="2" fill="#907018"/><path d="M5.5 5.5L3.5 10" stroke="#888" stroke-width="0.9"/><path d="M13.5 5.5L15.5 10" stroke="#888" stroke-width="0.9"/></svg>
<svg style="position:absolute;left:708px;top:134px" width="19" height="18" viewBox="0 0 19 18"><rect x="0.8" y="0.8" width="15.4" height="14.4" fill="#d4dcf4" stroke="#2838b8" stroke-width="1.5"/><path d="M2.3 2.5V14M2 13.2H14" stroke="#2838b8" stroke-width="1.2" stroke-dasharray="1 1"/><path d="M4.5 3.5H9.8V7" fill="none" stroke="#c03020" stroke-width="1.5"/><path d="M7.2 6L9.8 9.3L12.4 6Z" fill="#c03020"/><rect x="6.8" y="9.3" width="11.4" height="7.4" fill="#fcfcfc" stroke="#181818" stroke-width="1.5"/><rect x="9.3" y="11.7" width="6.4" height="2.6" fill="none" stroke="#181818" stroke-width="1.1"/></svg>
<svg style="position:absolute;left:734px;top:134px" width="19" height="18" viewBox="0 0 19 18"><rect x="0.8" y="0.8" width="15.4" height="14.4" fill="#d4dcf4" stroke="#2838b8" stroke-width="1.5"/><path d="M2.3 2.5V14M2 13.2H14" stroke="#2838b8" stroke-width="1.2" stroke-dasharray="1 1"/><path d="M12.5 8.5V3.8H7" fill="none" stroke="#c03020" stroke-width="1.5"/><path d="M7.5 1.2L4 3.8L7.5 6.4Z" fill="#c03020"/><rect x="6.8" y="9.3" width="11.4" height="7.4" fill="#fcfcfc" stroke="#181818" stroke-width="1.5"/><rect x="9.3" y="11.7" width="6.4" height="2.6" fill="none" stroke="#181818" stroke-width="1.1"/></svg>
<div style="position:absolute;left:759px;top:131px;width:1px;height:24px;background:#8c8ca4"></div>
<div style="position:absolute;left:760px;top:131px;width:1px;height:24px;background:#fff"></div>
<svg style="position:absolute;left:770px;top:134px" width="15" height="17" viewBox="0 0 15 17"><rect x="0.7" y="0.7" width="13.6" height="12.2" rx="1.8" fill="#3444c4" stroke="#101020" stroke-width="1.3"/><rect x="2.8" y="2.8" width="9.4" height="7.4" rx="0.8" fill="#c4d0f4"/><path d="M3.5 4L8 3.5L11.5 5" stroke="#f4f8ff" stroke-width="1.2" fill="none"/><path d="M3 14H12" stroke="#404050" stroke-width="1.6"/><path d="M2 16H13" stroke="#9c9cac" stroke-width="1.2"/></svg>
<svg style="position:absolute;left:796px;top:134px" width="17" height="18" viewBox="0 0 17 18"><path d="M4 5.5V1H11.5V5.5" fill="#d8d8dc" stroke="#9898a8" stroke-width="1.3"/><rect x="0.8" y="5.5" width="14" height="10.5" fill="#dcdce0" stroke="#9898a8" stroke-width="1.3"/><path d="M3 9H12.5M3 11.5H12.5M3 14H12.5" stroke="#a8a8b8" stroke-width="1.1"/><path d="M9 8V15" stroke="#a8a8b8" stroke-width="1"/><path d="M1.5 17H16V6.5" stroke="#fff" stroke-width="1" fill="none"/></svg>
<svg style="position:absolute;left:822px;top:134px" width="18" height="18" viewBox="0 0 18 18"><path d="M0.5 6H7M5 1.5H17M7 1.5V12M7 6.5H16M7 11.5H14" stroke="#a4a4b0" stroke-width="1.5" fill="none"/><path d="M10 6.5L16.5 12.5L13.8 13L15.3 16.5L13.8 17L12.3 13.5L10 15Z" fill="#9494a0"/><path d="M1 7.2H6M8.2 3H17" stroke="#fff" stroke-width="0.8"/></svg>
<div style="position:absolute;left:520px;top:159px;width:418px;height:170px;background:#5867a2;box-shadow:inset 1px 1px 0 #80808c,inset -1px -1px 0 #e8e8ec;"></div>
<svg style="position:absolute;left:521px;top:160px" width="416" height="168"><defs><pattern id="dp" width="32" height="32" patternUnits="userSpaceOnUse"><rect x="0" y="4" width="1" height="1" fill="#989810"/><rect x="0" y="10" width="1" height="1" fill="#86866a"/><rect x="0" y="21" width="1" height="1" fill="#86866a"/><rect x="0" y="24" width="1" height="1" fill="#86866a"/><rect x="0" y="26" width="1" height="1" fill="#86866a"/><rect x="1" y="0" width="1" height="1" fill="#86866a"/><rect x="1" y="2" width="1" height="1" fill="#86866a"/><rect x="1" y="6" width="1" height="1" fill="#86866a"/><rect x="1" y="13" width="1" height="1" fill="#86866a"/><rect x="1" y="19" width="1" height="1" fill="#86866a"/><rect x="1" y="29" width="1" height="1" fill="#86866a"/><rect x="2" y="4" width="1" height="1" fill="#86866a"/><rect x="2" y="8" width="1" height="1" fill="#86866a"/><rect x="2" y="11" width="1" height="1" fill="#86866a"/><rect x="2" y="16" width="1" height="1" fill="#86866a"/><rect x="2" y="23" width="1" height="1" fill="#989810"/><rect x="2" y="25" width="1" height="1" fill="#86866a"/><rect x="2" y="27" width="1" height="1" fill="#86866a"/><rect x="3" y="0" width="1" height="1" fill="#86866a"/><rect x="3" y="2" width="1" height="1" fill="#86866a"/><rect x="3" y="14" width="1" height="1" fill="#86866a"/><rect x="3" y="21" width="1" height="1" fill="#86866a"/><rect x="3" y="30" width="1" height="1" fill="#86866a"/><rect x="4" y="4" width="1" height="1" fill="#86866a"/><rect x="4" y="6" width="1" height="1" fill="#86866a"/><rect x="4" y="8" width="1" height="1" fill="#86866a"/><rect x="4" y="17" width="1" height="1" fill="#86866a"/><rect x="4" y="19" width="1" height="1" fill="#86866a"/><rect x="4" y="24" width="1" height="1" fill="#86866a"/><rect x="4" y="26" width="1" height="1" fill="#86866a"/><rect x="4" y="28" width="1" height="1" fill="#989810"/><rect x="5" y="0" width="1" height="1" fill="#86866a"/><rect x="5" y="10" width="1" height="1" fill="#86866a"/><rect x="5" y="13" width="1" height="1" fill="#86866a"/><rect x="5" y="21" width="1" height="1" fill="#86866a"/><rect x="5" y="30" width="1" height="1" fill="#86866a"/><rect x="6" y="2" width="1" height="1" fill="#86866a"/><rect x="6" y="6" width="1" height="1" fill="#86866a"/><rect x="6" y="15" width="1" height="1" fill="#86866a"/><rect x="6" y="18" width="1" height="1" fill="#86866a"/><rect x="6" y="25" width="1" height="1" fill="#86866a"/><rect x="6" y="27" width="1" height="1" fill="#86866a"/><rect x="7" y="4" width="1" height="1" fill="#86866a"/><rect x="7" y="8" width="1" height="1" fill="#86866a"/><rect x="7" y="10" width="1" height="1" fill="#86866a"/><rect x="7" y="13" width="1" height="1" fill="#989810"/><rect x="7" y="20" width="1" height="1" fill="#86866a"/><rect x="7" y="23" width="1" height="1" fill="#86866a"/><rect x="7" y="31" width="1" height="1" fill="#86866a"/><rect x="8" y="2" width="1" height="1" fill="#86866a"/><rect x="8" y="15" width="1" height="1" fill="#86866a"/><rect x="8" y="17" width="1" height="1" fill="#86866a"/><rect x="8" y="26" width="1" height="1" fill="#86866a"/><rect x="8" y="28" width="1" height="1" fill="#86866a"/><rect x="9" y="0" width="1" height="1" fill="#86866a"/><rect x="9" y="5" width="1" height="1" fill="#86866a"/><rect x="9" y="8" width="1" height="1" fill="#86866a"/><rect x="9" y="11" width="1" height="1" fill="#86866a"/><rect x="9" y="13" width="1" height="1" fill="#86866a"/><rect x="9" y="19" width="1" height="1" fill="#86866a"/><rect x="9" y="23" width="1" height="1" fill="#989810"/><rect x="9" y="30" width="1" height="1" fill="#86866a"/><rect x="10" y="16" width="1" height="1" fill="#86866a"/><rect x="10" y="21" width="1" height="1" fill="#86866a"/><rect x="11" y="0" width="1" height="1" fill="#86866a"/><rect x="11" y="2" width="1" height="1" fill="#86866a"/><rect x="11" y="4" width="1" height="1" fill="#86866a"/><rect x="11" y="6" width="1" height="1" fill="#86866a"/><rect x="11" y="8" width="1" height="1" fill="#86866a"/><rect x="11" y="12" width="1" height="1" fill="#86866a"/><rect x="11" y="25" width="1" height="1" fill="#86866a"/><rect x="11" y="27" width="1" height="1" fill="#86866a"/><rect x="11" y="30" width="1" height="1" fill="#86866a"/><rect x="12" y="10" width="1" height="1" fill="#86866a"/><rect x="12" y="15" width="1" height="1" fill="#86866a"/><rect x="12" y="17" width="1" height="1" fill="#989810"/><rect x="12" y="20" width="1" height="1" fill="#86866a"/><rect x="12" y="22" width="1" height="1" fill="#86866a"/><rect x="13" y="0" width="1" height="1" fill="#86866a"/><rect x="13" y="3" width="1" height="1" fill="#86866a"/><rect x="13" y="5" width="1" height="1" fill="#86866a"/><rect x="13" y="8" width="1" height="1" fill="#86866a"/><rect x="13" y="13" width="1" height="1" fill="#86866a"/><rect x="13" y="24" width="1" height="1" fill="#86866a"/><rect x="13" y="26" width="1" height="1" fill="#86866a"/><rect x="13" y="28" width="1" height="1" fill="#86866a"/><rect x="13" y="30" width="1" height="1" fill="#86866a"/><rect x="14" y="15" width="1" height="1" fill="#86866a"/><rect x="14" y="18" width="1" height="1" fill="#86866a"/><rect x="14" y="20" width="1" height="1" fill="#86866a"/><rect x="14" y="22" width="1" height="1" fill="#989810"/><rect x="15" y="0" width="1" height="1" fill="#86866a"/><rect x="15" y="3" width="1" height="1" fill="#86866a"/><rect x="15" y="6" width="1" height="1" fill="#86866a"/><rect x="15" y="9" width="1" height="1" fill="#86866a"/><rect x="15" y="11" width="1" height="1" fill="#86866a"/><rect x="15" y="13" width="1" height="1" fill="#86866a"/><rect x="15" y="25" width="1" height="1" fill="#86866a"/><rect x="15" y="30" width="1" height="1" fill="#86866a"/><rect x="16" y="15" width="1" height="1" fill="#86866a"/><rect x="16" y="17" width="1" height="1" fill="#86866a"/><rect x="16" y="20" width="1" height="1" fill="#86866a"/><rect x="16" y="28" width="1" height="1" fill="#86866a"/><rect x="17" y="2" width="1" height="1" fill="#86866a"/><rect x="17" y="4" width="1" height="1" fill="#86866a"/><rect x="17" y="6" width="1" height="1" fill="#989810"/><rect x="17" y="13" width="1" height="1" fill="#86866a"/><rect x="17" y="22" width="1" height="1" fill="#86866a"/><rect x="18" y="8" width="1" height="1" fill="#86866a"/><rect x="18" y="11" width="1" height="1" fill="#86866a"/><rect x="18" y="16" width="1" height="1" fill="#86866a"/><rect x="18" y="18" width="1" height="1" fill="#86866a"/><rect x="18" y="24" width="1" height="1" fill="#86866a"/><rect x="18" y="27" width="1" height="1" fill="#86866a"/><rect x="18" y="29" width="1" height="1" fill="#86866a"/><rect x="18" y="31" width="1" height="1" fill="#86866a"/><rect x="19" y="1" width="1" height="1" fill="#86866a"/><rect x="19" y="5" width="1" height="1" fill="#86866a"/><rect x="19" y="21" width="1" height="1" fill="#86866a"/><rect x="20" y="3" width="1" height="1" fill="#86866a"/><rect x="20" y="8" width="1" height="1" fill="#989810"/><rect x="20" y="11" width="1" height="1" fill="#86866a"/><rect x="20" y="13" width="1" height="1" fill="#86866a"/><rect x="20" y="15" width="1" height="1" fill="#86866a"/><rect x="20" y="18" width="1" height="1" fill="#86866a"/><rect x="20" y="28" width="1" height="1" fill="#86866a"/><rect x="21" y="5" width="1" height="1" fill="#86866a"/><rect x="21" y="22" width="1" height="1" fill="#86866a"/><rect x="21" y="24" width="1" height="1" fill="#86866a"/><rect x="21" y="26" width="1" height="1" fill="#86866a"/><rect x="21" y="31" width="1" height="1" fill="#86866a"/><rect x="22" y="2" width="1" height="1" fill="#86866a"/><rect x="22" y="7" width="1" height="1" fill="#86866a"/><rect x="22" y="9" width="1" height="1" fill="#86866a"/><rect x="22" y="11" width="1" height="1" fill="#86866a"/><rect x="22" y="13" width="1" height="1" fill="#989810"/><rect x="22" y="15" width="1" height="1" fill="#86866a"/><rect x="22" y="17" width="1" height="1" fill="#86866a"/><rect x="22" y="19" width="1" height="1" fill="#86866a"/><rect x="22" y="28" width="1" height="1" fill="#86866a"/><rect x="23" y="21" width="1" height="1" fill="#86866a"/><rect x="23" y="23" width="1" height="1" fill="#86866a"/><rect x="23" y="30" width="1" height="1" fill="#86866a"/><rect x="24" y="0" width="1" height="1" fill="#86866a"/><rect x="24" y="2" width="1" height="1" fill="#86866a"/><rect x="24" y="4" width="1" height="1" fill="#86866a"/><rect x="24" y="7" width="1" height="1" fill="#86866a"/><rect x="24" y="9" width="1" height="1" fill="#86866a"/><rect x="24" y="11" width="1" height="1" fill="#86866a"/><rect x="24" y="25" width="1" height="1" fill="#86866a"/><rect x="24" y="27" width="1" height="1" fill="#989810"/><rect x="25" y="13" width="1" height="1" fill="#86866a"/><rect x="25" y="15" width="1" height="1" fill="#86866a"/><rect x="25" y="17" width="1" height="1" fill="#86866a"/><rect x="25" y="19" width="1" height="1" fill="#86866a"/><rect x="25" y="22" width="1" height="1" fill="#86866a"/><rect x="25" y="30" width="1" height="1" fill="#86866a"/><rect x="26" y="1" width="1" height="1" fill="#86866a"/><rect x="26" y="3" width="1" height="1" fill="#86866a"/><rect x="26" y="5" width="1" height="1" fill="#86866a"/><rect x="26" y="7" width="1" height="1" fill="#86866a"/><rect x="26" y="9" width="1" height="1" fill="#86866a"/><rect x="26" y="11" width="1" height="1" fill="#86866a"/><rect x="26" y="24" width="1" height="1" fill="#86866a"/><rect x="26" y="28" width="1" height="1" fill="#86866a"/><rect x="27" y="14" width="1" height="1" fill="#989810"/><rect x="27" y="16" width="1" height="1" fill="#86866a"/><rect x="27" y="26" width="1" height="1" fill="#86866a"/><rect x="27" y="31" width="1" height="1" fill="#86866a"/><rect x="28" y="1" width="1" height="1" fill="#86866a"/><rect x="28" y="4" width="1" height="1" fill="#86866a"/><rect x="28" y="6" width="1" height="1" fill="#86866a"/><rect x="28" y="10" width="1" height="1" fill="#86866a"/><rect x="28" y="12" width="1" height="1" fill="#86866a"/><rect x="28" y="19" width="1" height="1" fill="#86866a"/><rect x="28" y="21" width="1" height="1" fill="#86866a"/><rect x="28" y="23" width="1" height="1" fill="#86866a"/><rect x="28" y="29" width="1" height="1" fill="#86866a"/><rect x="29" y="8" width="1" height="1" fill="#86866a"/><rect x="29" y="15" width="1" height="1" fill="#86866a"/><rect x="29" y="17" width="1" height="1" fill="#989810"/><rect x="29" y="26" width="1" height="1" fill="#86866a"/><rect x="29" y="31" width="1" height="1" fill="#86866a"/><rect x="30" y="2" width="1" height="1" fill="#86866a"/><rect x="30" y="5" width="1" height="1" fill="#86866a"/><rect x="30" y="10" width="1" height="1" fill="#86866a"/><rect x="30" y="20" width="1" height="1" fill="#86866a"/><rect x="30" y="22" width="1" height="1" fill="#86866a"/><rect x="30" y="24" width="1" height="1" fill="#86866a"/><rect x="30" y="29" width="1" height="1" fill="#86866a"/><rect x="31" y="8" width="1" height="1" fill="#86866a"/><rect x="31" y="12" width="1" height="1" fill="#86866a"/><rect x="31" y="14" width="1" height="1" fill="#86866a"/><rect x="31" y="16" width="1" height="1" fill="#86866a"/><rect x="31" y="18" width="1" height="1" fill="#86866a"/><rect x="31" y="31" width="1" height="1" fill="#989810"/></pattern></defs><rect width="416" height="168" fill="url(#dp)"/></svg>
<svg style="position:absolute;left:562px;top:187px" width="350" height="94" viewBox="0 0 350 94"><rect x="0" y="0" width="350" height="94" fill="#040808"/><path d="M43.8 0V94" stroke="#e8e8e8" stroke-width="1" stroke-dasharray="1 4.3" opacity="0.9"/><path d="M43.8 0V3M43.8 91V94" stroke="#f0f0f0" stroke-width="1"/><path d="M87.5 0V94" stroke="#e8e8e8" stroke-width="1" stroke-dasharray="1 4.3" opacity="0.9"/><path d="M87.5 0V3M87.5 91V94" stroke="#f0f0f0" stroke-width="1"/><path d="M131.2 0V94" stroke="#e8e8e8" stroke-width="1" stroke-dasharray="1 4.3" opacity="0.9"/><path d="M131.2 0V3M131.2 91V94" stroke="#f0f0f0" stroke-width="1"/><path d="M175.0 0V94" stroke="#e8e8e8" stroke-width="1" stroke-dasharray="1 4.3" opacity="0.9"/><path d="M175.0 0V3M175.0 91V94" stroke="#f0f0f0" stroke-width="1"/><path d="M218.8 0V94" stroke="#e8e8e8" stroke-width="1" stroke-dasharray="1 4.3" opacity="0.9"/><path d="M218.8 0V3M218.8 91V94" stroke="#f0f0f0" stroke-width="1"/><path d="M262.5 0V94" stroke="#e8e8e8" stroke-width="1" stroke-dasharray="1 4.3" opacity="0.9"/><path d="M262.5 0V3M262.5 91V94" stroke="#f0f0f0" stroke-width="1"/><path d="M306.2 0V94" stroke="#e8e8e8" stroke-width="1" stroke-dasharray="1 4.3" opacity="0.9"/><path d="M306.2 0V3M306.2 91V94" stroke="#f0f0f0" stroke-width="1"/><path d="M0 38.5H350" stroke="#e8e8e8" stroke-width="1" stroke-dasharray="1 4.3" opacity="0.9"/><path d="M0 38.5H3M347 38.5H350" stroke="#f0f0f0" stroke-width="1"/><path d="M0 75.3H350" stroke="#e8e8e8" stroke-width="1" stroke-dasharray="1 4.3" opacity="0.9"/><path d="M0 75.3H3M347 75.3H350" stroke="#f0f0f0" stroke-width="1"/><path d="M0.9 16.8 L1.7 14.5 L2.4 8.9 L3.2 3.3 L3.9 0.9 L4.8 10.1 L5.6 32.2 L6.5 54.3 L7.3 63.5 L8.1 57.8 L8.9 44.1 L9.7 30.4 L10.5 24.8 L10.8 29.7 L11.2 41.6 L11.5 53.6 L11.9 58.5 L12.5 51.8 L13.2 35.7 L13.8 19.5 L14.4 12.9 L15.3 21.9 L16.1 43.6 L17.0 65.4 L17.8 74.4 L18.6 64.7 L19.3 41.1 L20.0 17.6 L20.8 7.9 L21.5 16.8 L22.3 38.2 L23.0 59.6 L23.8 68.4 L24.5 61.0 L25.3 43.1 L26.0 25.2 L26.8 17.8 L27.2 24.6 L27.7 41.1 L28.2 57.6 L28.7 64.5 L29.5 55.7 L30.2 34.7 L31.0 13.6 L31.7 4.9 L32.6 15.2 L33.4 40.2 L34.2 65.1 L35.1 75.4 L35.9 64.5 L36.7 38.2 L37.5 11.8 L38.3 0.9 L39.1 12.1 L40.0 39.2 L40.8 66.2 L41.6 77.4 L42.4 66.2 L43.1 39.2 L43.9 12.1 L44.6 0.9 L45.6 11.7 L46.6 37.7 L47.6 63.6 L48.6 74.4 L49.5 63.6 L50.4 37.7 L51.3 11.7 L52.2 0.9 L53.3 11.4 L54.3 36.7 L55.4 61.9 L56.5 72.4 L57.5 61.9 L58.5 36.7 L59.5 11.4 L60.5 0.9 L62.0 11.3 L63.5 36.2 L65.0 61.1 L66.5 71.4 L67.2 64.3 L67.9 47.1 L68.7 29.9 L69.4 22.8 L70.2 29.2 L70.9 44.6 L71.7 60.1 L72.4 66.5 L73.4 56.9 L74.4 33.7 L75.4 10.5 L76.4 0.9 L77.4 10.4 L78.4 33.2 L79.4 56.0 L80.4 65.5 L81.1 58.6 L81.8 42.1 L82.6 25.6 L83.3 18.8 L84.0 25.5 L84.6 41.6 L85.3 57.8 L85.9 64.5 L86.6 58.8 L87.3 45.1 L88.0 31.4 L88.7 25.8 L89.5 30.8 L90.3 43.1 L91.1 55.4 L91.9 60.5 L92.6 53.4 L93.3 36.2 L94.0 19.0 L94.6 11.9 L95.4 19.0 L96.2 36.2 L97.0 53.4 L97.8 60.5 L98.7 51.9 L99.5 31.2 L100.4 10.5 L101.2 1.9 L102.4 9.5 L103.7 27.7 L104.9 46.0 L106.2 53.6 L106.9 49.0 L107.7 38.2 L108.4 27.3 L109.1 22.8 L109.8 28.3 L110.4 41.6 L111.1 55.0 L111.7 60.5 L112.6 52.5 L113.4 33.2 L114.3 13.9 L115.1 5.9 L115.9 13.6 L116.8 32.2 L117.6 50.8 L118.5 58.5 L119.6 54.4 L120.8 44.6 L121.9 34.8 L123.0 30.7 L123.5 33.9 L124.0 41.6 L124.5 49.4 L125.0 52.6 L125.8 46.6 L126.5 32.2 L127.3 17.8 L128.0 11.9 L129.0 23.8 L130.0 52.6 L131.0 81.3 L132.0 93.3 L133.2 80.5 L134.5 49.6 L135.7 18.7 L136.9 5.9 L137.9 18.7 L138.9 49.6 L139.9 80.5 L140.9 93.3 L142.1 79.9 L143.4 47.6 L144.6 15.3 L145.9 1.9 L146.6 12.8 L147.4 39.2 L148.1 65.5 L148.8 76.4 L149.7 65.3 L150.6 38.7 L151.5 12.0 L152.4 0.9 L153.3 12.7 L154.1 41.1 L155.0 69.6 L155.8 81.3 L156.5 71.3 L157.3 47.1 L158.0 22.9 L158.8 12.9 L159.5 21.0 L160.3 40.6 L161.0 60.3 L161.8 68.4 L162.6 58.6 L163.5 34.7 L164.4 10.8 L165.3 0.9 L166.2 11.4 L167.0 36.7 L167.9 61.9 L168.7 72.4 L169.4 63.1 L170.2 40.6 L170.9 18.2 L171.7 8.9 L172.4 17.9 L173.2 39.7 L173.9 61.4 L174.7 70.4 L175.0 62.6 L175.3 43.6 L175.6 24.7 L175.9 16.8 L176.6 14.5 L177.4 8.9 L178.1 3.3 L178.8 0.9 L179.7 10.1 L180.5 32.2 L181.4 54.3 L182.2 63.5 L183.0 57.8 L183.8 44.1 L184.6 30.4 L185.4 24.8 L185.7 29.7 L186.1 41.6 L186.4 53.6 L186.8 58.5 L187.4 51.8 L188.1 35.7 L188.7 19.5 L189.4 12.9 L190.2 21.9 L191.0 43.6 L191.9 65.4 L192.7 74.4 L193.5 64.7 L194.2 41.1 L195.0 17.6 L195.7 7.9 L196.5 16.8 L197.2 38.2 L197.9 59.6 L198.7 68.4 L199.4 61.0 L200.2 43.1 L200.9 25.2 L201.7 17.8 L202.2 24.6 L202.7 41.1 L203.2 57.6 L203.7 64.5 L204.4 55.7 L205.1 34.7 L205.9 13.6 L206.6 4.9 L207.5 15.2 L208.3 40.2 L209.2 65.1 L210.0 75.4 L210.8 64.5 L211.6 38.2 L212.4 11.8 L213.2 0.9 L214.0 12.1 L214.9 39.2 L215.7 66.2 L216.6 77.4 L217.3 66.2 L218.0 39.2 L218.8 12.1 L219.5 0.9 L220.5 11.7 L221.5 37.7 L222.5 63.6 L223.5 74.4 L224.4 63.6 L225.3 37.7 L226.2 11.7 L227.1 0.9 L228.2 11.4 L229.3 36.7 L230.4 61.9 L231.4 72.4 L232.4 61.9 L233.4 36.7 L234.4 11.4 L235.4 0.9 L236.9 11.3 L238.4 36.2 L239.9 61.1 L241.4 71.4 L242.1 64.3 L242.9 47.1 L243.6 29.9 L244.4 22.8 L245.1 29.2 L245.8 44.6 L246.6 60.1 L247.3 66.5 L248.3 56.9 L249.3 33.7 L250.3 10.5 L251.3 0.9 L252.3 10.4 L253.3 33.2 L254.3 56.0 L255.3 65.5 L256.0 58.6 L256.8 42.1 L257.5 25.6 L258.3 18.8 L258.9 25.5 L259.5 41.6 L260.2 57.8 L260.8 64.5 L261.5 58.8 L262.2 45.1 L262.9 31.4 L263.6 25.8 L264.4 30.8 L265.2 43.1 L266.0 55.4 L266.8 60.5 L267.5 53.4 L268.2 36.2 L268.9 19.0 L269.6 11.9 L270.4 19.0 L271.2 36.2 L272.0 53.4 L272.7 60.5 L273.6 51.9 L274.4 31.2 L275.3 10.5 L276.1 1.9 L277.4 9.5 L278.6 27.7 L279.8 46.0 L281.1 53.6 L281.8 49.0 L282.6 38.2 L283.3 27.3 L284.1 22.8 L284.7 28.3 L285.4 41.6 L286.0 55.0 L286.6 60.5 L288.0 40.5" fill="none" stroke="#ecec14" stroke-width="1.1" stroke-linejoin="round"/><rect x="0.5" y="0.5" width="349" height="93" fill="none" stroke="#e8e8ec" stroke-width="1"/></svg>
<svg style="position:absolute;left:562.0px;top:296.5px" width="1" height="1"><text x="0" y="0" text-anchor="middle" xml:space="preserve" style="font:12px 'Liberation Sans',sans-serif;fill:#e4e4e8;white-space:pre;">0</text></svg>
<svg style="position:absolute;left:605.75px;top:296.5px" width="1" height="1"><text x="0" y="0" text-anchor="middle" xml:space="preserve" style="font:12px 'Liberation Sans',sans-serif;fill:#e4e4e8;white-space:pre;">1</text></svg>
<svg style="position:absolute;left:649.5px;top:296.5px" width="1" height="1"><text x="0" y="0" text-anchor="middle" xml:space="preserve" style="font:12px 'Liberation Sans',sans-serif;fill:#e4e4e8;white-space:pre;">2</text></svg>
<svg style="position:absolute;left:693.25px;top:296.5px" width="1" height="1"><text x="0" y="0" text-anchor="middle" xml:space="preserve" style="font:12px 'Liberation Sans',sans-serif;fill:#e4e4e8;white-space:pre;">3</text></svg>
<svg style="position:absolute;left:737.0px;top:296.5px" width="1" height="1"><text x="0" y="0" text-anchor="middle" xml:space="preserve" style="font:12px 'Liberation Sans',sans-serif;fill:#e4e4e8;white-space:pre;">4</text></svg>
<svg style="position:absolute;left:780.75px;top:296.5px" width="1" height="1"><text x="0" y="0" text-anchor="middle" xml:space="preserve" style="font:12px 'Liberation Sans',sans-serif;fill:#e4e4e8;white-space:pre;">5</text></svg>
<svg style="position:absolute;left:824.5px;top:296.5px" width="1" height="1"><text x="0" y="0" text-anchor="middle" xml:space="preserve" style="font:12px 'Liberation Sans',sans-serif;fill:#e4e4e8;white-space:pre;">6</text></svg>
<svg style="position:absolute;left:868.25px;top:296.5px" width="1" height="1"><text x="0" y="0" text-anchor="middle" xml:space="preserve" style="font:12px 'Liberation Sans',sans-serif;fill:#e4e4e8;white-space:pre;">7</text></svg>
<svg style="position:absolute;left:912.0px;top:296.5px" width="1" height="1"><text x="0" y="0" text-anchor="middle" xml:space="preserve" style="font:12px 'Liberation Sans',sans-serif;fill:#e4e4e8;white-space:pre;">8</text></svg>
<svg style="position:absolute;left:558px;top:191.3px" width="1" height="1"><text x="0" y="0" text-anchor="end" xml:space="preserve" style="font:12px 'Liberation Sans',sans-serif;fill:#e4e4e8;white-space:pre;">14.62</text></svg>
<svg style="position:absolute;left:558px;top:229.3px" width="1" height="1"><text x="0" y="0" text-anchor="end" xml:space="preserve" style="font:12px 'Liberation Sans',sans-serif;fill:#e4e4e8;white-space:pre;">14.6</text></svg>
<svg style="position:absolute;left:558px;top:266.3px" width="1" height="1"><text x="0" y="0" text-anchor="end" xml:space="preserve" style="font:12px 'Liberation Sans',sans-serif;fill:#e4e4e8;white-space:pre;">14.58</text></svg>
<svg style="position:absolute;left:521px;top:322.7px" width="1" height="1"><text x="0" y="0" text-anchor="start" xml:space="preserve" style="font:11px 'Liberation Sans',sans-serif;fill:#e8e8ec;white-space:pre;">Time offset:    8</text></svg>
<div style="position:absolute;left:514px;top:341.5px;width:429px;height:192.3px;background:#d4d0c8;box-shadow:inset 1px 1px 0 #d4d0c8,inset -1px -1px 0 #404040,inset 2px 2px 0 #fff,inset -2px -2px 0 #808080;"></div>
<div style="position:absolute;left:518px;top:345.5px;width:421px;height:19px;background:linear-gradient(90deg,#84848e 0%,#9094ac 30%,#a8a8b8 60%,#c4c4cc 100%)"></div>
<svg style="position:absolute;left:519.8px;top:346.5px" width="17" height="17.5" viewBox="0 0 17 17.5"><rect width="17" height="17.5" fill="#040c0c"/><path d="M1 9.7L4 8.4L6.2 9.4L4.6 11.2L2 10.9Z" fill="#78a4b8"/><path d="M10.6 3L6.6 6.6L4.8 8.6L6.4 9.2L10.9 4.6Z" fill="#2848a8"/><path d="M11.8 1.5L13.6 6L16 12.4L13.3 10.6L12 12.3L9 16.2L7 16L6 12.6L9 7Z" fill="#d05018"/><path d="M11.8 2.5L12.8 6L11 8L12 5Z" fill="#f08828"/><path d="M12 5.8L13 9L12.2 12L10 14.2L8.2 15.8L7.4 14.8L10.8 10.6L11.2 7Z" fill="#f8e010"/></svg>
<svg style="position:absolute;left:539px;top:359.2px" width="1" height="1"><text x="0" y="0" text-anchor="start" xml:space="preserve" style="font:bold 10.7px 'DejaVu Sans','Liberation Sans',sans-serif;fill:#d0ccc4;white-space:pre;word-spacing:3px;">Fuel Command</text></svg>
<div style="position:absolute;left:883.5px;top:347.5px;width:16.5px;height:14.5px;background:#d4d0c8;box-shadow:inset 1px 1px 0 #fff,inset -1px -1px 0 #404040,inset -2px -2px 0 #808080;"></div>
<div style="position:absolute;left:887.5px;top:356.5px;width:6px;height:2px;background:#000"></div>
<div style="position:absolute;left:900px;top:347.5px;width:16.5px;height:14.5px;background:#d4d0c8;box-shadow:inset 1px 1px 0 #fff,inset -1px -1px 0 #404040,inset -2px -2px 0 #808080;"></div>
<div style="position:absolute;left:903px;top:349.5px;width:9px;height:9px;border:1px solid #000;border-top:2px solid #000;box-sizing:border-box"></div>
<div style="position:absolute;left:919.5px;top:347.5px;width:17px;height:14.5px;background:#d4d0c8;box-shadow:inset 1px 1px 0 #fff,inset -1px -1px 0 #404040,inset -2px -2px 0 #808080;"></div>
<svg style="position:absolute;left:923.5px;top:350.5px" width="8" height="7" viewBox="0 0 8 7"><path d="M0.5 0L7.5 7M7.5 0L0.5 7" stroke="#000" stroke-width="1.7" fill="none"/></svg>
<div style="position:absolute;left:518px;top:367.0px;width:421px;height:1px;background:#f4f4f0"></div>
<div style="position:absolute;left:522px;top:370.5px;width:3px;height:25px;background:#d4d0c8;box-shadow:inset 1px 1px 0 #fff,inset -1px -1px 0 #808088;"></div>
<div style="position:absolute;left:525px;top:370.5px;width:3px;height:25px;background:#d4d0c8;box-shadow:inset 1px 1px 0 #fff,inset -1px -1px 0 #808088;"></div>
<svg style="position:absolute;left:533px;top:375.5px" width="19" height="16" viewBox="0 0 19 16"><path d="M5 6.5L7 0.8H15.5L13.5 6.5Z" fill="#e8e8e8" stroke="#181818" stroke-width="1.2"/><path d="M8 2.5H13.5M7.5 4.2H13" stroke="#707890" stroke-width="1.1"/><path d="M1 8L3.5 6.5H16L18 8V12.5H1Z" fill="#e4e4e4" stroke="#181818" stroke-width="1.3"/><path d="M14 6.5L17.8 4.5V9" fill="#c8c8c8" stroke="#181818" stroke-width="1.1"/><rect x="1" y="8.3" width="16" height="1.4" fill="#181818"/><rect x="8.5" y="10.6" width="3" height="1.3" fill="#f0e810"/><path d="M2.5 12.8H16.5V14.8H3.5Z" fill="#f4f4f4" stroke="#181818" stroke-width="1.2"/></svg>
<svg style="position:absolute;left:559px;top:374.5px" width="18" height="18" viewBox="0 0 18 18"><path d="M0.8 17H17V4.5H13V2.5H9.5V4.5H6V0.8H0.8Z" fill="#e8ecfc" stroke="#2838b8" stroke-width="1.5"/><path d="M2.5 7H6M2.5 10H6M2.5 13H6" stroke="#c03030" stroke-width="1.5"/><path d="M8 7H15M8 10H15M8 13H15" stroke="#fff" stroke-width="1.8"/><path d="M8 8.5H15M8 11.5H15" stroke="#4858c0" stroke-width="0.8"/></svg>
<div style="position:absolute;left:584px;top:371.5px;width:1px;height:24px;background:#8c8ca4"></div>
<div style="position:absolute;left:585px;top:371.5px;width:1px;height:24px;background:#fff"></div>
<div style="position:absolute;left:589px;top:371.5px;width:26px;height:25px;background:#f8f8f6;box-shadow:inset 1px 1px 0 #808088,inset -1px -1px 0 #fff;"></div>
<svg style="position:absolute;left:595px;top:375.5px" width="18" height="18" viewBox="0 0 18 18"><circle cx="11" cy="6.8" r="5.6" fill="#f4f8ff" stroke="#181818" stroke-width="1.3"/><path d="M8 5.5A3.6 3.6 0 0 1 12.5 3.2" stroke="#5088d8" stroke-width="1.3" fill="none"/><path d="M8.5 9.3A3.6 3.6 0 0 0 11 10.4" stroke="#5088d8" stroke-width="1.1" fill="none"/><path d="M6.8 11L1 17" stroke="#101010" stroke-width="2.2" stroke-linecap="round"/></svg>
<svg style="position:absolute;left:620px;top:374.5px" width="18" height="18" viewBox="0 0 18 18"><circle cx="11" cy="6.8" r="5.6" fill="#dce4f4" stroke="#181818" stroke-width="1.3"/><path d="M7.5 3.3L14.5 10.3M14.5 3.3L7.5 10.3" stroke="#3050c8" stroke-width="1.4"/><path d="M6.8 11L1 17" stroke="#101010" stroke-width="2.2" stroke-linecap="round"/></svg>
<svg style="position:absolute;left:646px;top:374.5px" width="18" height="18" viewBox="0 0 18 18"><circle cx="11" cy="6.8" r="5.6" fill="#dce4f4" stroke="#181818" stroke-width="1.3"/><path d="M7.5 3.3L11 6.8L14.5 3.3M11 6.8V12" stroke="#3050c8" stroke-width="1.4" fill="none"/><path d="M6.8 11L1 17" stroke="#101010" stroke-width="2.2" stroke-linecap="round"/></svg>
<div style="position:absolute;left:671px;top:371.5px;width:1px;height:24px;background:#8c8ca4"></div>
<div style="position:absolute;left:672px;top:371.5px;width:1px;height:24px;background:#fff"></div>
<svg style="position:absolute;left:680px;top:374.5px" width="19" height="18" viewBox="0 0 19 18"><path d="M4 0.8H8V4H11V0.8H15V4L18.5 11V16.8H11V9.5H8V16.8H0.5V11L4 4Z" fill="#101010"/><rect x="2.7" y="13" width="3.6" height="2" fill="#907018"/><rect x="12.7" y="13" width="3.6" height="2" fill="#907018"/><path d="M5.5 5.5L3.5 10" stroke="#888" stroke-width="0.9"/><path d="M13.5 5.5L15.5 10" stroke="#888" stroke-width="0.9"/></svg>
<svg style="position:absolute;left:706px;top:374.5px" width="19" height="18" viewBox="0 0 19 18"><rect x="0.8" y="0.8" width="15.4" height="14.4" fill="#d4dcf4" stroke="#2838b8" stroke-width="1.5"/><path d="M2.3 2.5V14M2 13.2H14" stroke="#2838b8" stroke-width="1.2" stroke-dasharray="1 1"/><path d="M4.5 3.5H9.8V7" fill="none" stroke="#c03020" stroke-width="1.5"/><path d="M7.2 6L9.8 9.3L12.4 6Z" fill="#c03020"/><rect x="6.8" y="9.3" width="11.4" height="7.4" fill="#fcfcfc" stroke="#181818" stroke-width="1.5"/><rect x="9.3" y="11.7" width="6.4" height="2.6" fill="none" stroke="#181818" stroke-width="1.1"/></svg>
<svg style="position:absolute;left:732px;top:374.5px" width="19" height="18" viewBox="0 0 19 18"><rect x="0.8" y="0.8" width="15.4" height="14.4" fill="#d4dcf4" stroke="#2838b8" stroke-width="1.5"/><path d="M2.3 2.5V14M2 13.2H14" stroke="#2838b8" stroke-width="1.2" stroke-dasharray="1 1"/><path d="M12.5 8.5V3.8H7" fill="none" stroke="#c03020" stroke-width="1.5"/><path d="M7.5 1.2L4 3.8L7.5 6.4Z" fill="#c03020"/><rect x="6.8" y="9.3" width="11.4" height="7.4" fill="#fcfcfc" stroke="#181818" stroke-width="1.5"/><rect x="9.3" y="11.7" width="6.4" height="2.6" fill="none" stroke="#181818" stroke-width="1.1"/></svg>
<div style="position:absolute;left:757px;top:371.5px;width:1px;height:24px;background:#8c8ca4"></div>
<div style="position:absolute;left:758px;top:371.5px;width:1px;height:24px;background:#fff"></div>
<svg style="position:absolute;left:768px;top:374.5px" width="15" height="17" viewBox="0 0 15 17"><rect x="0.7" y="0.7" width="13.6" height="12.2" rx="1.8" fill="#3444c4" stroke="#101020" stroke-width="1.3"/><rect x="2.8" y="2.8" width="9.4" height="7.4" rx="0.8" fill="#c4d0f4"/><path d="M3.5 4L8 3.5L11.5 5" stroke="#f4f8ff" stroke-width="1.2" fill="none"/><path d="M3 14H12" stroke="#404050" stroke-width="1.6"/><path d="M2 16H13" stroke="#9c9cac" stroke-width="1.2"/></svg>
<svg style="position:absolute;left:794px;top:374.5px" width="17" height="18" viewBox="0 0 17 18"><path d="M4 5.5V1H11.5V5.5" fill="#d8d8dc" stroke="#9898a8" stroke-width="1.3"/><rect x="0.8" y="5.5" width="14" height="10.5" fill="#dcdce0" stroke="#9898a8" stroke-width="1.3"/><path d="M3 9H12.5M3 11.5H12.5M3 14H12.5" stroke="#a8a8b8" stroke-width="1.1"/><path d="M9 8V15" stroke="#a8a8b8" stroke-width="1"/><path d="M1.5 17H16V6.5" stroke="#fff" stroke-width="1" fill="none"/></svg>
<svg style="position:absolute;left:820px;top:374.5px" width="18" height="18" viewBox="0 0 18 18"><path d="M0.5 6H7M5 1.5H17M7 1.5V12M7 6.5H16M7 11.5H14" stroke="#a4a4b0" stroke-width="1.5" fill="none"/><path d="M10 6.5L16.5 12.5L13.8 13L15.3 16.5L13.8 17L12.3 13.5L10 15Z" fill="#9494a0"/><path d="M1 7.2H6M8.2 3H17" stroke="#fff" stroke-width="0.8"/></svg>
<div style="position:absolute;left:518px;top:399.5px;width:421px;height:130.29999999999995px;background:#5867a2;box-shadow:inset 1px 1px 0 #80808c,inset -1px -1px 0 #e8e8ec;"></div>
<svg style="position:absolute;left:519px;top:400.5px" width="419" height="128.29999999999995"><rect width="419" height="128.29999999999995" fill="url(#dp)"/></svg>
<svg style="position:absolute;left:560.5px;top:429px" width="351.5" height="54.5" viewBox="0 0 351.5 54.5"><rect x="0" y="0" width="351.5" height="54.5" fill="#040808"/><path d="M43.9 0V54.5" stroke="#e8e8e8" stroke-width="1" stroke-dasharray="1 4.3" opacity="0.9"/><path d="M43.9 0V3M43.9 51.5V54.5" stroke="#f0f0f0" stroke-width="1"/><path d="M87.9 0V54.5" stroke="#e8e8e8" stroke-width="1" stroke-dasharray="1 4.3" opacity="0.9"/><path d="M87.9 0V3M87.9 51.5V54.5" stroke="#f0f0f0" stroke-width="1"/><path d="M131.8 0V54.5" stroke="#e8e8e8" stroke-width="1" stroke-dasharray="1 4.3" opacity="0.9"/><path d="M131.8 0V3M131.8 51.5V54.5" stroke="#f0f0f0" stroke-width="1"/><path d="M175.8 0V54.5" stroke="#e8e8e8" stroke-width="1" stroke-dasharray="1 4.3" opacity="0.9"/><path d="M175.8 0V3M175.8 51.5V54.5" stroke="#f0f0f0" stroke-width="1"/><path d="M219.7 0V54.5" stroke="#e8e8e8" stroke-width="1" stroke-dasharray="1 4.3" opacity="0.9"/><path d="M219.7 0V3M219.7 51.5V54.5" stroke="#f0f0f0" stroke-width="1"/><path d="M263.6 0V54.5" stroke="#e8e8e8" stroke-width="1" stroke-dasharray="1 4.3" opacity="0.9"/><path d="M263.6 0V3M263.6 51.5V54.5" stroke="#f0f0f0" stroke-width="1"/><path d="M307.6 0V54.5" stroke="#e8e8e8" stroke-width="1" stroke-dasharray="1 4.3" opacity="0.9"/><path d="M307.6 0V3M307.6 51.5V54.5" stroke="#f0f0f0" stroke-width="1"/><path d="M0 27.0H351.5" stroke="#e8e8e8" stroke-width="1" stroke-dasharray="1 4.3" opacity="0.9"/><path d="M0 27.0H3M348.5 27.0H351.5" stroke="#f0f0f0" stroke-width="1"/><path d="M14.1 54.0 L15.9 53.8 L17.7 51.1 L19.6 49.5 L21.4 48.9 L23.3 46.5 L25.1 45.0 L26.9 44.4 L28.8 42.2 L30.6 40.8 L32.5 40.2 L34.3 38.4 L36.2 37.0 L38.0 36.4 L39.8 34.9 L41.7 35.2 L43.5 33.0 L45.4 31.8 L47.2 32.0 L49.0 30.0 L50.9 29.0 L52.7 29.1 L54.6 27.4 L56.4 26.6 L58.2 26.6 L60.1 25.1 L61.9 24.4 L63.8 24.4 L65.6 23.3 L67.5 24.3 L69.3 22.6 L71.1 21.8 L73.0 22.8 L74.8 21.2 L76.7 20.7 L78.5 21.6 L80.3 20.2 L82.2 19.9 L84.0 20.7 L85.9 19.6 L87.7 19.5 L89.5 20.1 L91.4 19.4 L93.2 19.4 L95.1 19.6 L96.9 20.4 L98.8 19.8 L100.6 20.0 L102.4 21.2 L104.3 20.5 L106.1 20.9 L108.0 22.3 L109.8 21.6 L111.6 22.1 L113.5 23.7 L115.3 22.9 L117.2 23.7 L119.0 23.8 L120.8 24.6 L122.7 25.8 L124.5 25.9 L126.4 26.7 L128.2 28.2 L130.1 28.3 L131.9 29.1 L133.7 30.9 L135.6 31.0 L137.4 32.0 L139.3 34.1 L141.1 34.0 L142.9 35.2 L144.8 35.8 L146.6 37.4 L148.5 38.9 L150.3 39.5 L152.1 41.1 L154.0 42.9 L155.8 43.6 L157.7 45.1 L159.5 47.3 L161.4 48.0 L163.2 49.6 L165.0 52.1 L166.9 52.7 L168.7 54.0" fill="none" stroke="#e4e418" stroke-width="1.05"/><path d="M189.8 54.0 L191.7 53.3 L193.5 51.4 L195.4 49.5 L197.2 48.5 L199.1 46.8 L200.9 44.8 L202.8 44.0 L204.6 42.6 L206.4 40.5 L208.3 40.0 L210.1 38.7 L212.0 38.3 L213.8 36.3 L215.7 35.1 L217.5 34.7 L219.4 33.0 L221.2 31.9 L223.1 31.5 L224.9 30.1 L226.8 29.0 L228.6 28.7 L230.5 27.6 L232.3 26.4 L234.2 26.2 L236.0 25.4 L237.9 25.8 L239.7 24.1 L241.6 23.5 L243.4 23.9 L245.3 22.5 L247.1 22.0 L249.0 22.3 L250.8 21.2 L252.7 20.8 L254.5 21.1 L256.4 20.2 L258.2 19.9 L260.1 20.3 L261.9 19.7 L263.8 21.1 L265.6 19.8 L267.5 20.4 L269.3 19.4 L271.2 19.6 L273.0 20.8 L274.8 19.8 L276.7 20.2 L278.5 21.6 L280.4 20.5 L282.2 21.1 L284.1 22.7 L285.9 21.6 L287.8 22.4" fill="none" stroke="#e4e418" stroke-width="1.05"/><rect x="0.5" y="0.5" width="350.5" height="53.5" fill="none" stroke="#e8e8ec" stroke-width="1"/></svg>
<svg style="position:absolute;left:560.5px;top:498px" width="1" height="1"><text x="0" y="0" text-anchor="middle" xml:space="preserve" style="font:12px 'Liberation Sans',sans-serif;fill:#e4e4e8;white-space:pre;">0</text></svg>
<svg style="position:absolute;left:604.4375px;top:498px" width="1" height="1"><text x="0" y="0" text-anchor="middle" xml:space="preserve" style="font:12px 'Liberation Sans',sans-serif;fill:#e4e4e8;white-space:pre;">1</text></svg>
<svg style="position:absolute;left:648.375px;top:498px" width="1" height="1"><text x="0" y="0" text-anchor="middle" xml:space="preserve" style="font:12px 'Liberation Sans',sans-serif;fill:#e4e4e8;white-space:pre;">2</text></svg>
<svg style="position:absolute;left:692.3125px;top:498px" width="1" height="1"><text x="0" y="0" text-anchor="middle" xml:space="preserve" style="font:12px 'Liberation Sans',sans-serif;fill:#e4e4e8;white-space:pre;">3</text></svg>
<svg style="position:absolute;left:736.25px;top:498px" width="1" height="1"><text x="0" y="0" text-anchor="middle" xml:space="preserve" style="font:12px 'Liberation Sans',sans-serif;fill:#e4e4e8;white-space:pre;">4</text></svg>
<svg style="position:absolute;left:780.1875px;top:498px" width="1" height="1"><text x="0" y="0" text-anchor="middle" xml:space="preserve" style="font:12px 'Liberation Sans',sans-serif;fill:#e4e4e8;white-space:pre;">5</text></svg>
<svg style="position:absolute;left:824.125px;top:498px" width="1" height="1"><text x="0" y="0" text-anchor="middle" xml:space="preserve" style="font:12px 'Liberation Sans',sans-serif;fill:#e4e4e8;white-space:pre;">6</text></svg>
<svg style="position:absolute;left:868.0625px;top:498px" width="1" height="1"><text x="0" y="0" text-anchor="middle" xml:space="preserve" style="font:12px 'Liberation Sans',sans-serif;fill:#e4e4e8;white-space:pre;">7</text></svg>
<svg style="position:absolute;left:912.0px;top:498px" width="1" height="1"><text x="0" y="0" text-anchor="middle" xml:space="preserve" style="font:12px 'Liberation Sans',sans-serif;fill:#e4e4e8;white-space:pre;">8</text></svg>
<svg style="position:absolute;left:556.5px;top:433.3px" width="1" height="1"><text x="0" y="0" text-anchor="end" xml:space="preserve" style="font:12px 'Liberation Sans',sans-serif;fill:#e4e4e8;white-space:pre;">2</text></svg>
<svg style="position:absolute;left:556.5px;top:459.8px" width="1" height="1"><text x="0" y="0" text-anchor="end" xml:space="preserve" style="font:12px 'Liberation Sans',sans-serif;fill:#e4e4e8;white-space:pre;">1.5</text></svg>
<svg style="position:absolute;left:556.5px;top:485.8px" width="1" height="1"><text x="0" y="0" text-anchor="end" xml:space="preserve" style="font:12px 'Liberation Sans',sans-serif;fill:#e4e4e8;white-space:pre;">1</text></svg>
<svg style="position:absolute;left:518.4px;top:523.4px" width="1" height="1"><text x="0" y="0" text-anchor="start" xml:space="preserve" style="font:11px 'Liberation Sans',sans-serif;fill:#e8e8ec;white-space:pre;">Time offset:    8</text></svg>
</body></html>
